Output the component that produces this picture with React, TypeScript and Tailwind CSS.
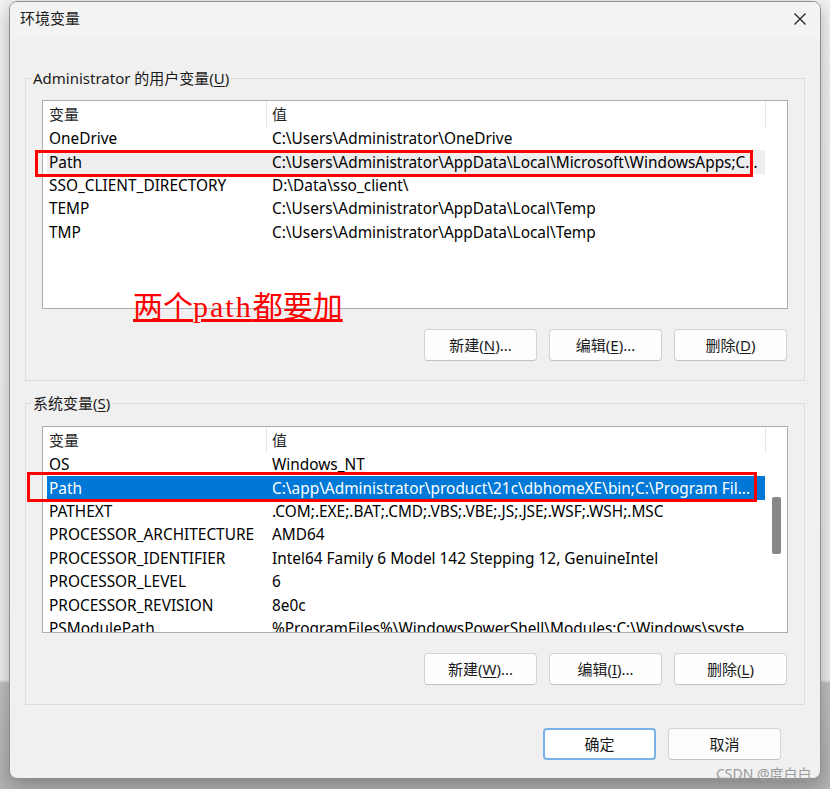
type Row = { name: string; value: string; state?: "selected" | "inactive" };

const userVars: Row[] = [
  { name: "OneDrive", value: "C:\\Users\\Administrator\\OneDrive" },
  { name: "Path", value: "C:\\Users\\Administrator\\AppData\\Local\\Microsoft\\WindowsApps;C...", state: "inactive" },
  { name: "SSO_CLIENT_DIRECTORY", value: "D:\\Data\\sso_client\\" },
  { name: "TEMP", value: "C:\\Users\\Administrator\\AppData\\Local\\Temp" },
  { name: "TMP", value: "C:\\Users\\Administrator\\AppData\\Local\\Temp" },
];

const systemVars: Row[] = [
  { name: "OS", value: "Windows_NT" },
  { name: "Path", value: "C:\\app\\Administrator\\product\\21c\\dbhomeXE\\bin;C:\\Program Fil...", state: "selected" },
  { name: "PATHEXT", value: ".COM;.EXE;.BAT;.CMD;.VBS;.VBE;.JS;.JSE;.WSF;.WSH;.MSC" },
  { name: "PROCESSOR_ARCHITECTURE", value: "AMD64" },
  { name: "PROCESSOR_IDENTIFIER", value: "Intel64 Family 6 Model 142 Stepping 12, GenuineIntel" },
  { name: "PROCESSOR_LEVEL", value: "6" },
  { name: "PROCESSOR_REVISION", value: "8e0c" },
  { name: "PSModulePath", value: "%ProgramFiles%\\WindowsPowerShell\\Modules;C:\\Windows\\syste" },
];

const Button = ({ label, mn, suffix = "" }: { label: string; mn: string; suffix?: string }) => (
  <button className="h-[32px] w-[113px] rounded-[4px] border border-[#d3d3d3] border-b-[#c2c2c2] bg-[#fdfdfd] text-[15px] leading-5 text-[#1a1a1a]">
    {label}(<span className="underline underline-offset-2">{mn}</span>){suffix}
  </button>
);

const VarList = ({ rows, scroll, height }: { rows: Row[]; scroll?: boolean; height: string }) => (
  <div className={`flex overflow-hidden border border-[#a9acb1] bg-white ${height}`}>
    <div className="w-[723px] shrink-0">
      {/* header */}
      <div className="flex h-[26px] text-[#1f1f1f]">
        <div className="flex w-[223px] items-center pl-[6px]">变量</div>
        <div className="w-px bg-[#e5e5e5]" />
        <div className="flex flex-1 items-center pl-[5px]">值</div>
        <div className="w-px bg-[#e5e5e5]" />
      </div>
      {rows.map((r) => (
        <div
          key={r.name}
          className={`ml-[4px] flex h-[23.45px] w-[718px] items-center whitespace-nowrap text-[15.4px] ${
            r.state === "selected" ? "bg-[#0078d7] text-white" : r.state === "inactive" ? "bg-[#eeeeee] text-black" : "text-black"
          }`}
        >
          <div className="w-[219px] shrink-0 pl-[2px]">{r.name}</div>
          <div className="overflow-hidden pl-[6px]">{r.value}</div>
        </div>
      ))}
    </div>
    <div className="flex-1">
      {scroll && <div className="ml-[6px] mt-[70px] h-[57px] w-[9px] rounded-[2px] bg-[#878787]" />}
    </div>
  </div>
);

const Group = ({
  label,
  mn,
  rows,
  buttons,
  scroll,
  height,
  listTop,
  className = "",
}: {
  label: string;
  mn: string;
  rows: Row[];
  buttons: [string, string, string][];
  scroll?: boolean;
  height: string;
  listTop: string;
  className?: string;
}) => (
  <fieldset className={`border border-[#dcdcdc] ${className}`}>
    <legend className="ml-[5px] px-[2px] leading-5 text-[#1a1a1a]">
      {label}(<span className="underline underline-offset-2">{mn}</span>)
    </legend>
    <div className="px-[16px] pb-[19px]">
      <div className={listTop}>
        <VarList rows={rows} scroll={scroll} height={height} />
      </div>
      <div className="mt-[20px] flex justify-end gap-3 pr-px">
        {buttons.map(([l, m, s]) => (
          <Button key={l} label={l} mn={m} suffix={s} />
        ))}
      </div>
    </div>
  </fieldset>
);

export default function App() {
  return (
    <div className="relative h-[789px] w-[830px] overflow-hidden bg-[linear-gradient(to_bottom,#f4f4f4_0px,#efefef_680px,#c2c2c2_683px,#b3b3b3_789px)] pl-[9px] pt-px font-['Noto_Sans','Noto_Sans_CJK_SC',sans-serif] text-[15px] text-[#1a1a1a]">
      {/* dialog */}
      <div className="flex h-[778px] w-[812px] flex-col overflow-hidden rounded-lg border border-[#8f8f8f] bg-[#f0f0f0] shadow-[0_6px_20px_rgba(0,0,0,0.3)]">
        <div className="flex h-[36px] items-start justify-between bg-[#f3f3f3] pl-[10px] pr-[14px]">
          <span className="pt-[6px] leading-5">环境变量</span>
          <svg className="mt-[11px]" width="12" height="12" viewBox="0 0 12 12" fill="none" stroke="#1c1c1c" strokeWidth="1.2">
            <path d="M0.5 0.5 L11.5 11.5 M11.5 0.5 L0.5 11.5" />
          </svg>
        </div>
        <div className="flex flex-col px-[15px] pt-[30px]">
          <Group
            label="Administrator 的用户变量"
            mn="U"
            rows={userVars}
            height="h-[209px]"
            listTop="mt-[12px]"
            buttons={[
              ["新建", "N", "..."],
              ["编辑", "E", "..."],
              ["删除", "D", ""],
            ]}
          />
          <Group
            className="mt-[12px]"
            label="系统变量"
            mn="S"
            rows={systemVars}
            scroll
            height="h-[207px]"
            listTop="mt-[13px]"
            buttons={[
              ["新建", "W", "..."],
              ["编辑", "I", "..."],
              ["删除", "L", ""],
            ]}
          />
          <div className="mt-[23px] flex justify-end gap-3 pr-[24px]">
            <button className="h-[32px] w-[113px] rounded-[4px] border-2 border-[#7ab1e6] bg-white text-[15px] leading-5 text-[#1a1a1a]">确定</button>
            <button className="h-[32px] w-[113px] rounded-[4px] border border-[#d3d3d3] border-b-[#c2c2c2] bg-[#fdfdfd] text-[15px] leading-5 text-[#1a1a1a]">取消</button>
          </div>
        </div>
      </div>

      {/* annotations */}
      <div className="absolute left-[35px] top-[150px] h-[27px] w-[718px] border-[3px] border-[#ff0000]" />
      <div className="absolute left-[27px] top-[472px] h-[30px] w-[730px] border-[3px] border-[#ff0000]" />
      <div className="absolute left-[133px] top-[292px] font-['Liberation_Serif','Noto_Sans_CJK_SC',serif] text-[30px] leading-[30px] text-[#ff0000] underline">
        两个<span className="tracking-[2px]">path</span>都要加
      </div>
      <div className="absolute left-[716px] top-[765px] text-[14px] leading-[18px] text-[#9a9a9a]">CSDN @度白白</div>
    </div>
  );
}
